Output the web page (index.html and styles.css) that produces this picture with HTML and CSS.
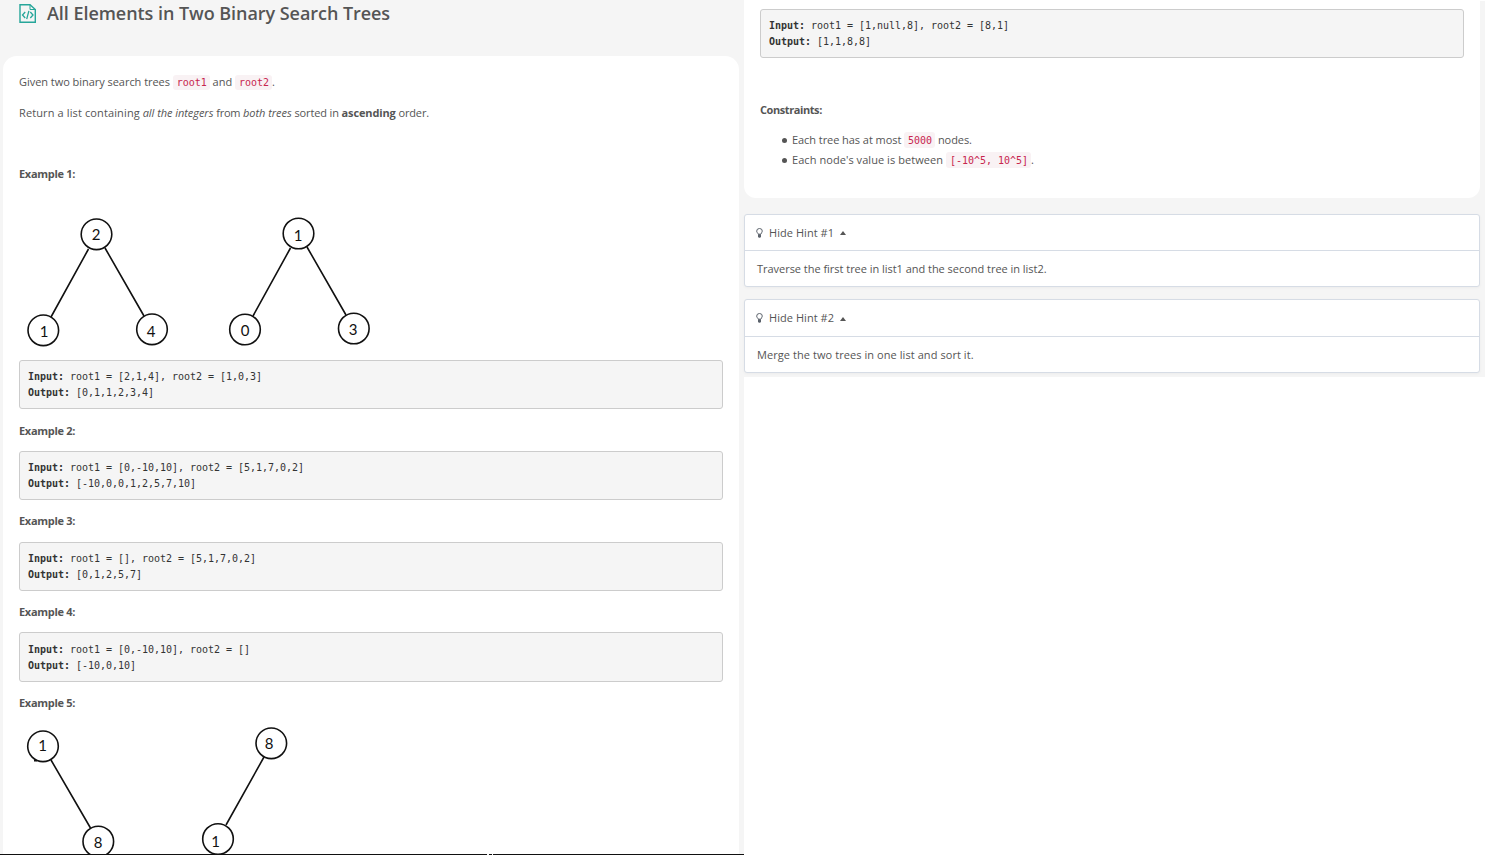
FILE: index.html
```html
<!DOCTYPE html>
<html lang="en">
<head>
<meta charset="utf-8">
<title>All Elements in Two Binary Search Trees</title>
<link rel="stylesheet" href="styles.css">
</head>
<body>
<div class="page">
  <main class="left">
    <header class="title">
      <svg class="file-icon" width="18" height="20" viewBox="0 0 18 20" fill="none" stroke="#26a69a" stroke-width="1.4">
        <path d="M1 1.700H11L16.300 6.500V19.300H1Z"/><path d="M11 1.700V6.500H16.300" stroke-width="1"/>
        <path d="M6.200 9L3.500 12L6.200 15M11.300 9L14 12L11.300 15M9.900 7.800L7.700 16.200" stroke-width="1.3"/>
      </svg>
      <h1>All Elements in Two Binary Search Trees</h1>
    </header>
    <section class="card">
      <p class="given">Given two binary search trees <code>root1</code> and <code>root2</code>.</p>
      <p class="return"><span class="lead">Return a list containing</span> <em>all the integers</em> <span class="from">from</span> <em>both trees</em> <span class="tail">sorted in <b>ascending</b> order.</span></p>
      <h2 class="first">Example 1:</h2>
      <svg class="tree" width="400" height="150" viewBox="19 205 400 150">
        <path d="M88.500 249L51 317M105 248L144 316M290.500 248L253 316M307 247L346 315"/>
        <circle cx="96.500" cy="234.300" r="15.300"/><circle cx="43.300" cy="330.300" r="15.300"/><circle cx="152" cy="329.300" r="15.300"/>
        <circle cx="298.500" cy="233.500" r="15.300"/><circle cx="245" cy="329.500" r="15.300"/><circle cx="353.800" cy="328.500" r="15.300"/>
        <text x="96" y="240">2</text><text x="44" y="337">1</text><text x="151" y="336.500">4</text>
        <text x="298" y="240.500">1</text><text x="245" y="336">0</text><text x="353" y="335">3</text>
      </svg>
      <pre><b>Input:</b> root1 = [2,1,4], root2 = [1,0,3]
<b>Output:</b> [0,1,1,2,3,4]</pre>
      <h2>Example 2:</h2>
      <pre><b>Input:</b> root1 = [0,-10,10], root2 = [5,1,7,0,2]
<b>Output:</b> [-10,0,0,1,2,5,7,10]</pre>
      <h2>Example 3:</h2>
      <pre><b>Input:</b> root1 = [], root2 = [5,1,7,0,2]
<b>Output:</b> [0,1,2,5,7]</pre>
      <h2>Example 4:</h2>
      <pre class="tall"><b>Input:</b> root1 = [0,-10,10], root2 = []
<b>Output:</b> [-10,0,10]</pre>
      <h2>Example 5:</h2>
      <svg class="tree" width="400" height="131" viewBox="19 723 400 131">
        <path d="M51 760L90.500 828M264 757L226 825M34 760.700H37"/>
        <circle cx="43" cy="746.300" r="15.300"/><circle cx="98.300" cy="841.500" r="15.300"/>
        <circle cx="271.300" cy="743.300" r="15.300"/><circle cx="218" cy="839" r="15.300"/>
        <text x="42.500" y="751">1</text><text x="98" y="848">8</text><text x="269" y="749">8</text><text x="215.500" y="846.500">1</text>
      </svg>
    </section>
    <div class="edge"><i></i><i></i><i></i></div>
  </main>
  <aside class="right">
    <section class="card end">
      <pre><b>Input:</b> root1 = [1,null,8], root2 = [8,1]
<b>Output:</b> [1,1,8,8]</pre>
      <h2 class="constraints">Constraints:</h2>
      <ul>
        <li class="most">Each tree has at most <code>5000</code> nodes.</li>
        <li class="between">Each node's value is between <code>[-10^5, 10^5]</code>.</li>
      </ul>
    </section>
    <section class="hint">
      <div class="hint-head">
        <svg width="7" height="10" viewBox="0 0 7 10"><path d="M2.200 6.200C2 5 .7 4.600 .7 3.100A2.800 2.600 0 0 1 6.300 3.100C6.300 4.600 5 5 4.800 6.200Z" fill="none" stroke="#5b626b"/><path d="M2 6.200H5V8.700L4.200 9.800H2.800L2 8.700Z" fill="#5b626b"/></svg>
        <span>Hide Hint #1</span><i class="caret"></i>
      </div>
      <div class="hint-body traverse">Traverse the first tree in list1 and the second tree in list2.</div>
    </section>
    <section class="hint second">
      <div class="hint-head">
        <svg width="7" height="10" viewBox="0 0 7 10"><path d="M2.200 6.200C2 5 .7 4.600 .7 3.100A2.800 2.600 0 0 1 6.300 3.100C6.300 4.600 5 5 4.800 6.200Z" fill="none" stroke="#5b626b"/><path d="M2 6.200H5V8.700L4.200 9.800H2.800L2 8.700Z" fill="#5b626b"/></svg>
        <span>Hide Hint #2</span><i class="caret"></i>
      </div>
      <div class="hint-body merge">Merge the two trees in one list and sort it.</div>
    </section>
  </aside>
</div>
</body>
</html>
```
FILE: styles.css
```css
* { box-sizing: border-box; }
body { margin: 0; background: #fff; color: #555; font: 11px/20px "Open Sans", "Noto Sans", sans-serif; overflow: hidden; }
h1, h2, p, ul, pre { margin: 0; padding: 0; }
.page { display: flex; width: 1485px; height: 855px; }
.left { width: 744px; height: 855px; padding-left: 3px; background: #f5f5f5; display: flex; flex-direction: column; }
.title { height: 56px; flex: none; display: flex; align-items: flex-start; padding: 2px 0 0 16px; }
.file-icon { margin: 1px 10px 0 0; flex: none; }
h1 { font-size: 18px; line-height: 22px; font-weight: 600; letter-spacing: -.05px; color: #555; white-space: nowrap; }
.card { background: #fff; width: 736px; padding: 16px 16px 0; }
.left .card { height: 798px; border-radius: 14px 14px 0 0; overflow: hidden; }
p { height: 20px; white-space: nowrap; }
.given { letter-spacing: -.04px; }
.given code { padding: 2px 3px 2px 4px; }
.return { margin-top: 11px; }
.lead { letter-spacing: .12px; }
.return em { letter-spacing: -.05px; }
.from { letter-spacing: -.25px; }
.tail { letter-spacing: -.13px; }
h2 { font-size: 11px; line-height: 20px; font-weight: 700; height: 20px; margin: 12px 0 10px; letter-spacing: -.3px; }
h2.first { margin: 41px 0 21px; }
.tree { display: block; margin-bottom: 5px; }
.tree path, .tree circle { fill: none; stroke: #111; stroke-width: 1.6; }
.tree text { font: 15px Lato, sans-serif; fill: #111; text-anchor: middle; }
pre { height: 49px; border: 1px solid #ccc; border-radius: 3px; background: #f5f5f5; color: #333; padding: 8px; line-height: 16px; }
.left pre + h2 { margin-top: 12px; }
.left pre ~ pre ~ h2 { margin-top: 11px; margin-bottom: 11px; }
.left pre ~ pre ~ pre ~ h2 { margin-bottom: 10px; }
pre.tall { height: 50px; padding-top: 9px; }
pre, code { font-family: "DejaVu Sans Mono", monospace; font-size: 10px; letter-spacing: -.02px; }
code { color: #c7254e; background: #f9f2f4; border-radius: 3px; padding: 2px 4px; }
.edge { height: 1px; margin-left: -3px; display: grid; grid-template-columns: 487px 3px 251px; column-gap: 1.500px; }
.edge i { background: #111; }
.right { width: 741px; height: 376px; margin-top: 1px; background: #f5f5f5; }
.card.end { height: 197px; padding-top: 8px; border-radius: 0 0 12px 12px; }
.constraints { margin: 42px 0 10px; letter-spacing: -.42px; }
ul { padding-left: 22px; list-style: none; }
li { height: 20px; display: flex; align-items: center; white-space: pre; }
li::before { content: ""; width: 5px; height: 5px; margin-right: 5px; border-radius: 50%; background: #555; }
li code { line-height: 12px; padding: 3px 3px 1px 4px; }
.most { letter-spacing: -.06px; }
.between { letter-spacing: .06px; }
.hint { width: 736px; height: 73px; margin-top: 16px; border: 1px solid #d6dce5; border-radius: 3px; background: #fff; box-shadow: 0 1px 3px rgba(0,0,0,.04); }
.hint.second { margin-top: 12px; height: 74px; }
.hint-head { display: flex; align-items: center; height: 36px; padding-left: 11px; border-bottom: 1px solid #d6dce5; }
.second .hint-head { height: 37px; }
.hint-head span { margin-left: 6px; letter-spacing: .05px; }
.caret { margin: 1px 0 0 6px; border: 3.500px solid transparent; border-top: 0; border-bottom: 4px solid #555; }
.hint-body { height: 35px; line-height: 36px; padding-left: 12px; }
.traverse { letter-spacing: -.03px; }
.merge { letter-spacing: .07px; }
```
